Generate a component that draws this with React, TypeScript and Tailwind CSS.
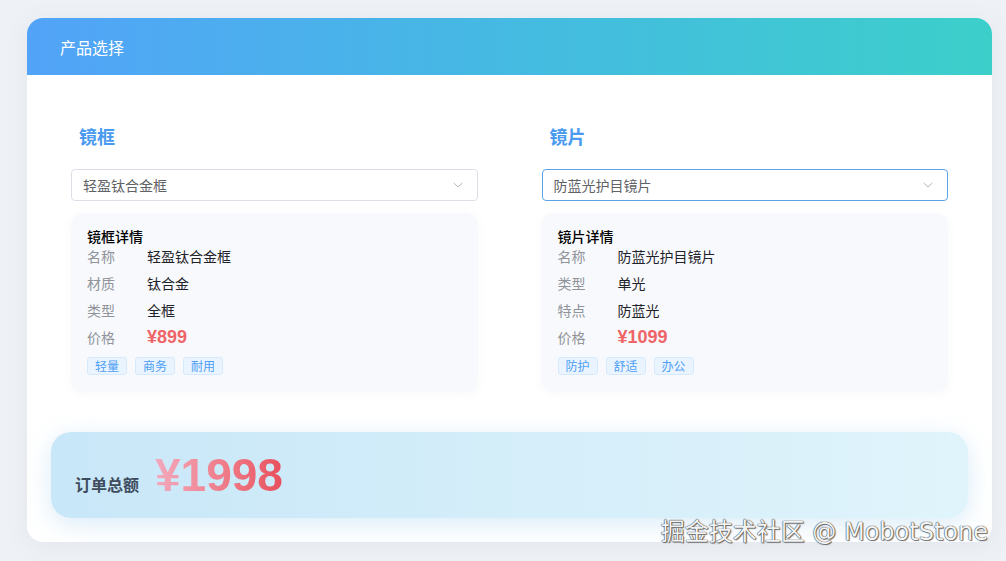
import { useState } from 'react'

// 镜框 / 镜片 两列的数据
const FRAMES = [
  {
    name: '轻盈钛合金框',
    rows: [
      ['名称', '轻盈钛合金框'],
      ['材质', '钛合金'],
      ['类型', '全框'],
    ],
    price: 899,
    tags: ['轻量', '商务', '耐用'],
  },
]

const LENSES = [
  {
    name: '防蓝光护目镜片',
    rows: [
      ['名称', '防蓝光护目镜片'],
      ['类型', '单光'],
      ['特点', '防蓝光'],
    ],
    price: 1099,
    tags: ['防护', '舒适', '办公'],
  },
]

type Item = (typeof FRAMES)[number]

function Chevron() {
  return (
    <svg width="12" height="12" viewBox="0 0 12 12" fill="none" className="text-[#b4b8bf]">
      <path d="M2 4.2 6 8l4-3.8" stroke="currentColor" strokeWidth="1" strokeLinecap="round" strokeLinejoin="round" />
    </svg>
  )
}

function Column({
  title,
  detailTitle,
  item,
  focused,
}: {
  title: string
  detailTitle: string
  item: Item
  focused?: boolean
}) {
  return (
    <div className="flex flex-col">
      <h2 className="pl-[8px] text-[18px] font-bold leading-[24px] text-[#4a9bf0]">{title}</h2>
      <button
        type="button"
        className={`mt-[21px] flex h-[32px] items-center justify-between rounded-[4px] border bg-white pl-[11px] pr-[13px] text-left text-[14px] text-[#606266] ${
          focused ? 'border-[#5aa3e8]' : 'border-[#dcdfe6]'
        }`}
      >
        <span>{item.name}</span>
        <Chevron />
      </button>
      <div className="mt-[12px] rounded-[12px] bg-[#f7f9fc] px-[16px] pb-[17px] pt-[15px] shadow-[0_2px_10px_rgba(120,140,170,0.06)]">
        <div className="h-[16px] text-[14px] font-medium leading-[16px] text-black">{detailTitle}</div>
        {item.rows.map(([k, v]) => (
          <div key={k} className="-mt-[1px] mb-[1px] flex h-[27px] items-center text-[14px]">
            <span className="w-[60px] text-[#909399]">{k}</span>
            <span className="text-[#1f2329]">{v}</span>
          </div>
        ))}
        <div className="-mt-[1px] flex h-[27px] items-center text-[14px]">
          <span className="w-[60px] text-[#909399]">价格</span>
          <span className="font-['Liberation_Sans',sans-serif] text-[18px] font-bold text-[#ef6467]">
            ¥{item.price}
          </span>
        </div>
        <div className="mt-[6px] flex gap-[8px]">
          {item.tags.map((t) => (
            <span
              key={t}
              className="flex h-[18px] w-[40px] items-center justify-center rounded-[3px] border border-[#d6e9fd] bg-[#eaf4ff] text-[12px] leading-none text-[#4d9ef5]"
            >
              {t}
            </span>
          ))}
        </div>
      </div>
    </div>
  )
}

export default function App() {
  const [frame] = useState(FRAMES[0])
  const [lens] = useState(LENSES[0])
  const total = frame.price + lens.price

  return (
    <div className="relative h-[561px] w-[1006px] overflow-hidden bg-[#eef1f5] pl-[27px] pt-[18px] font-['Noto_Sans_CJK_SC','Liberation_Sans',sans-serif]">
      <div className="w-[965px] overflow-hidden rounded-[16px] bg-white shadow-[0_4px_24px_rgba(100,120,150,0.08)]">
        <div className="flex h-[57px] items-center bg-gradient-to-r from-[#52a3f8] via-[#45bae2] to-[#3ccfca] pl-[33px] text-[16px] text-white">
          产品选择
        </div>

        <div className="px-[44px] pt-[49px]">
          <div className="grid grid-cols-2 gap-[64px]">
            <Column title="镜框" detailTitle="镜框详情" item={frame} />
            <Column title="镜片" detailTitle="镜片详情" item={lens} focused />
          </div>
        </div>

        <div className="px-[24px] pb-[24px] pt-[40px]">
          <div className="flex h-[86px] items-center rounded-[20px] bg-gradient-to-r from-[#c8e7f8] to-[#e0f4fb] pl-[24px] shadow-[0_6px_24px_rgba(150,200,235,0.35)]">
            <div className="flex items-baseline gap-[16px]">
              <span className="text-[16px] font-bold text-[#3e4c5e]">订单总额</span>
              <span className="bg-gradient-to-r from-[#f2a9bd] to-[#e84f5c] bg-clip-text font-['Liberation_Sans',sans-serif] text-[46px] font-bold leading-none text-transparent">
                ¥{total}
              </span>
            </div>
          </div>
        </div>
      </div>

      <div className="absolute bottom-[17px] right-[18px] font-['DejaVu_Sans','Noto_Sans_CJK_SC',sans-serif] text-[24px] leading-none text-[#f4f4f4] [text-shadow:0_0_1px_#333,0_0_1px_#333,1px_1px_1px_rgba(0,0,0,0.5)]">
        掘金技术社区 @ MobotStone
      </div>
    </div>
  )
}
